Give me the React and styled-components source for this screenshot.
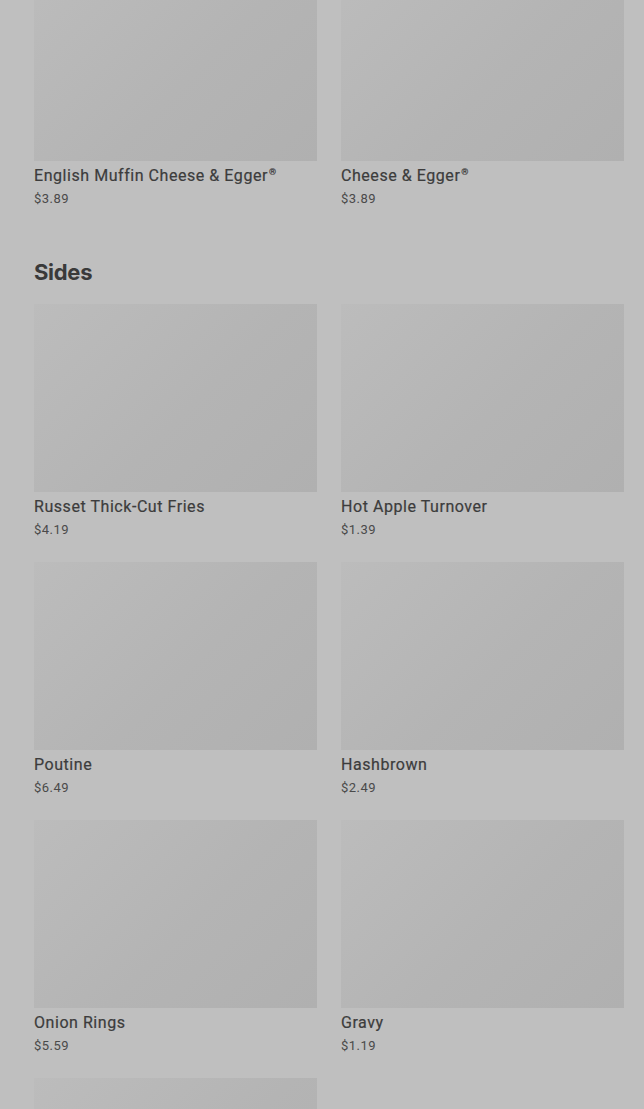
import React from 'react';
import styled, { createGlobalStyle } from 'styled-components';

const GlobalStyle = createGlobalStyle`
  html, body {
    margin: 0;
    padding: 0;
    background: #bfbfbf;
    overflow: hidden;
  }
  body {
    font-family: Roboto, "Liberation Sans", sans-serif;
  }
`;

const Page = styled.div`
  padding: 0 20px 0 34px;
  margin-top: -27px;
`;

const Section = styled.section`
  padding-bottom: ${(p) => p.$gap || 0}px;
`;

const Heading = styled.h2`
  margin: 0 0 16px;
  font-family: Inter, "Noto Sans", sans-serif;
  font-size: 22px;
  font-weight: 700;
  line-height: 32px;
  letter-spacing: -0.3px;
  color: #3a3a3a;
`;

const Grid = styled.div`
  display: grid;
  grid-template-columns: 1fr 1fr;
  column-gap: 24px;
  row-gap: 23px;
`;

const Card = styled.div`
  display: flex;
  flex-direction: column;
`;

const Thumb = styled.div`
  height: 188px;
  background: linear-gradient(135deg, #bcbcbc 0%, #b4b4b4 55%, #b0b0b0 100%);
`;

const Name = styled.div`
  margin-top: 5px;
  font-size: 16px;
  font-weight: 400;
  line-height: 20px;
  letter-spacing: 0.55px;
  color: #3c3c3c;
  -webkit-text-stroke: 0.2px #3c3c3c;
  sup {
    font-size: 9px;
    vertical-align: 6px;
    line-height: 0;
    margin-left: 1px;
  }
`;

const Price = styled.div`
  margin-top: 4px;
  font-size: 13px;
  line-height: 18px;
  letter-spacing: 0.5px;
  color: #4a4a4a;
`;

const breakfast = [
  { name: 'English Muffin Cheese & Egger', reg: true, price: '$3.89' },
  { name: 'Cheese & Egger', reg: true, price: '$3.89' },
];

const sides = [
  { name: 'Russet Thick-Cut Fries', price: '$4.19' },
  { name: 'Hot Apple Turnover', price: '$1.39' },
  { name: 'Poutine', price: '$6.49' },
  { name: 'Hashbrown', price: '$2.49' },
  { name: 'Onion Rings', price: '$5.59' },
  { name: 'Gravy', price: '$1.19' },
  { name: 'Side Salad', price: '$3.99' },
];

function Item({ item }) {
  return (
    <Card>
      <Thumb />
      <Name>
        {item.name}
        {item.reg && <sup>®</sup>}
      </Name>
      <Price>{item.price}</Price>
    </Card>
  );
}

export default function App() {
  return (
    <>
      <GlobalStyle />
      <Page>
        <Section $gap={48}>
          <Grid>
            {breakfast.map((it) => (
              <Item key={it.name} item={it} />
            ))}
          </Grid>
        </Section>
        <Section>
          <Heading>Sides</Heading>
          <Grid>
            {sides.map((it) => (
              <Item key={it.name} item={it} />
            ))}
          </Grid>
        </Section>
      </Page>
    </>
  );
}
